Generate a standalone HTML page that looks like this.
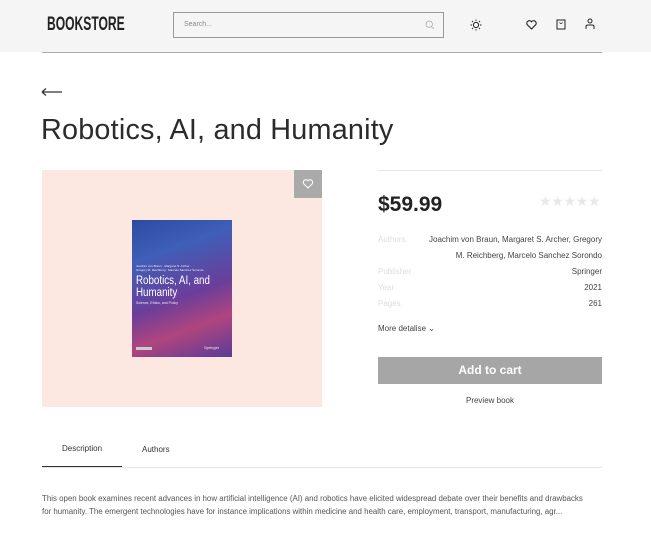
<!DOCTYPE html>
<html><head><meta charset="utf-8"><style>
*{margin:0;padding:0;box-sizing:border-box}
body{width:651px;height:550px;background:#fff;font-family:"Liberation Sans",sans-serif;color:#333;position:relative;overflow:hidden}
.a{position:absolute}
.hdr{left:0;top:0;width:651px;height:52px;background:#f5f5f5}
.row{position:absolute;left:378px;width:224px;font-size:8px;color:#444;line-height:16px}
.row .l{position:absolute;left:0;top:0;color:#ddd}
.row .r{position:absolute;right:0;top:0;text-align:right;white-space:nowrap}
</style></head><body>
<div class="a hdr"></div>
<div class="a" style="left:47px;top:13px;font-size:19.5px;font-weight:bold;color:#222;transform:scaleX(0.62);transform-origin:left;white-space:nowrap">BOOKSTORE</div>
<div class="a" style="left:173px;top:12px;width:271px;height:26px;border:1px solid #999;background:#f5f5f5"></div>
<div class="a" style="left:184px;top:21px;font-size:7px;color:#888">Search...</div>
<svg class="a" style="left:425px;top:20px" width="10" height="10" viewBox="0 0 10 10"><circle cx="4.2" cy="4.2" r="3.2" fill="none" stroke="#aaa" stroke-width="0.8"/><path d="M6.6 6.6L9 9" stroke="#aaa" stroke-width="0.8"/></svg>
<svg class="a" style="left:470px;top:19px" width="12" height="12" viewBox="0 0 12 12"><circle cx="6" cy="6" r="2.6" fill="none" stroke="#222" stroke-width="1"/><path d="M6 0.5v1.5M6 10v1.5M0.5 6h1.5M10 6h1.5M2 2l1 1M9 9l1 1M2 10l1-1M9 3l1-1" stroke="#222" stroke-width="0.9"/></svg>
<svg class="a" style="left:526px;top:20px" width="11" height="10" viewBox="0 0 11 10"><path d="M5.5 9L1.3 4.8A2.3 2.3 0 0 1 5.5 1.8A2.3 2.3 0 0 1 9.7 4.8Z" fill="none" stroke="#222" stroke-width="1.1"/></svg>
<svg class="a" style="left:556px;top:19px" width="10" height="11" viewBox="0 0 10 11"><rect x="1" y="1" width="8" height="9" fill="none" stroke="#222" stroke-width="1"/><path d="M3.5 3.5Q5 5.5 6.5 3.5" fill="none" stroke="#222" stroke-width="0.8"/></svg>
<svg class="a" style="left:585px;top:18px" width="10" height="12" viewBox="0 0 10 12"><circle cx="5" cy="3" r="2" fill="none" stroke="#222" stroke-width="1"/><path d="M1 11V8.5Q1 7 3 7H7Q9 7 9 8.5V11" fill="none" stroke="#222" stroke-width="1"/></svg>
<div class="a" style="left:42px;top:52px;width:560px;height:1px;background:#aaa"></div>
<svg class="a" style="left:41px;top:87px" width="22" height="10" viewBox="0 0 22 10"><path d="M1 5H21M1 5L5 1.5M1 5L5 8.5" fill="none" stroke="#333" stroke-width="1.2"/></svg>
<div class="a" style="left:41px;top:114px;font-size:28.8px;color:#2b2b2b;letter-spacing:0.2px;white-space:nowrap">Robotics, AI, and Humanity</div>
<div class="a" style="left:42px;top:170px;width:280px;height:237px;background:#fde7e1"></div>
<div class="a" style="left:294px;top:170px;width:28px;height:28px;background:#aaa"></div>
<svg class="a" style="left:302px;top:179px" width="12" height="10" viewBox="0 0 11 10"><path d="M5.5 9L1.3 4.8A2.3 2.3 0 0 1 5.5 1.8A2.3 2.3 0 0 1 9.7 4.8Z" fill="none" stroke="#fff" stroke-width="1"/></svg>
<div class="a" style="left:132px;top:220px;width:100px;height:137px;background:linear-gradient(160deg,#2c4ba0 0%,#3f5fb8 25%,#6a3e9a 55%,#b0457e 75%,#5a3c98 100%);overflow:hidden">
<div style="position:absolute;left:4px;top:44px;font-size:3px;color:#eee;line-height:4px">Joachim von Braun · Margaret S. Archer ·<br>Gregory M. Reichberg · Marcelo Sánchez Sorondo</div>
<div style="position:absolute;left:4px;top:55px;font-size:11.5px;color:#fff;line-height:12px;white-space:nowrap;transform:scaleX(0.85);transform-origin:left">Robotics, AI, and<br>Humanity</div>
<div style="position:absolute;left:4px;top:81px;font-size:3.5px;color:#eee">Science, Ethics, and Policy</div>
<div style="position:absolute;left:4px;top:127px;width:16px;height:3px;background:#ccc"></div>
<div style="position:absolute;left:72px;top:125px;font-size:4px;color:#eee">Springer</div>
</div>
<div class="a" style="left:378px;top:170px;width:224px;height:1px;background:#e6e6e6"></div>
<div class="a" style="left:378px;top:193px;font-size:21px;font-weight:bold;color:#222">$59.99</div>
<div class="a" style="left:539px;top:193px;font-size:14px;color:#e8e8e8;letter-spacing:-0.3px">★★★★★</div>
<div class="row" style="top:232px"><span class="l">Authors</span><span class="r">Joachim von Braun, Margaret S. Archer, Gregory<br>M. Reichberg, Marcelo Sanchez Sorondo</span></div>
<div class="row" style="top:264px"><span class="l">Publisher</span><span class="r">Springer</span></div>
<div class="row" style="top:280px"><span class="l">Year</span><span class="r">2021</span></div>
<div class="row" style="top:296px"><span class="l">Pages</span><span class="r">261</span></div>
<div class="a" style="left:378px;top:324px;font-size:8px;color:#444">More detalise ⌄</div>
<div class="a" style="left:378px;top:357px;width:224px;height:27px;background:#a6a6a6;color:#fff;font-size:12px;font-weight:bold;text-align:center;line-height:27px">Add to cart</div>
<div class="a" style="left:378px;top:396px;width:224px;text-align:center;font-size:8px;color:#444">Preview book</div>
<div class="a" style="left:62px;top:444px;font-size:8px;color:#333">Description</div>
<div class="a" style="left:142px;top:445px;font-size:8px;color:#333">Authors</div>
<div class="a" style="left:42px;top:467px;width:560px;height:1px;background:#e6e6e6"></div>
<div class="a" style="left:42px;top:466px;width:80px;height:1px;background:#333"></div>
<div class="a" style="left:42px;top:492px;width:544px;font-size:7.9px;line-height:13px;color:#555">This open book examines recent advances in how artificial intelligence (AI) and robotics have elicited widespread debate over their benefits and drawbacks for humanity. The emergent technologies have for instance implications within medicine and health care, employment, transport, manufacturing, agr...</div>
</body></html>
